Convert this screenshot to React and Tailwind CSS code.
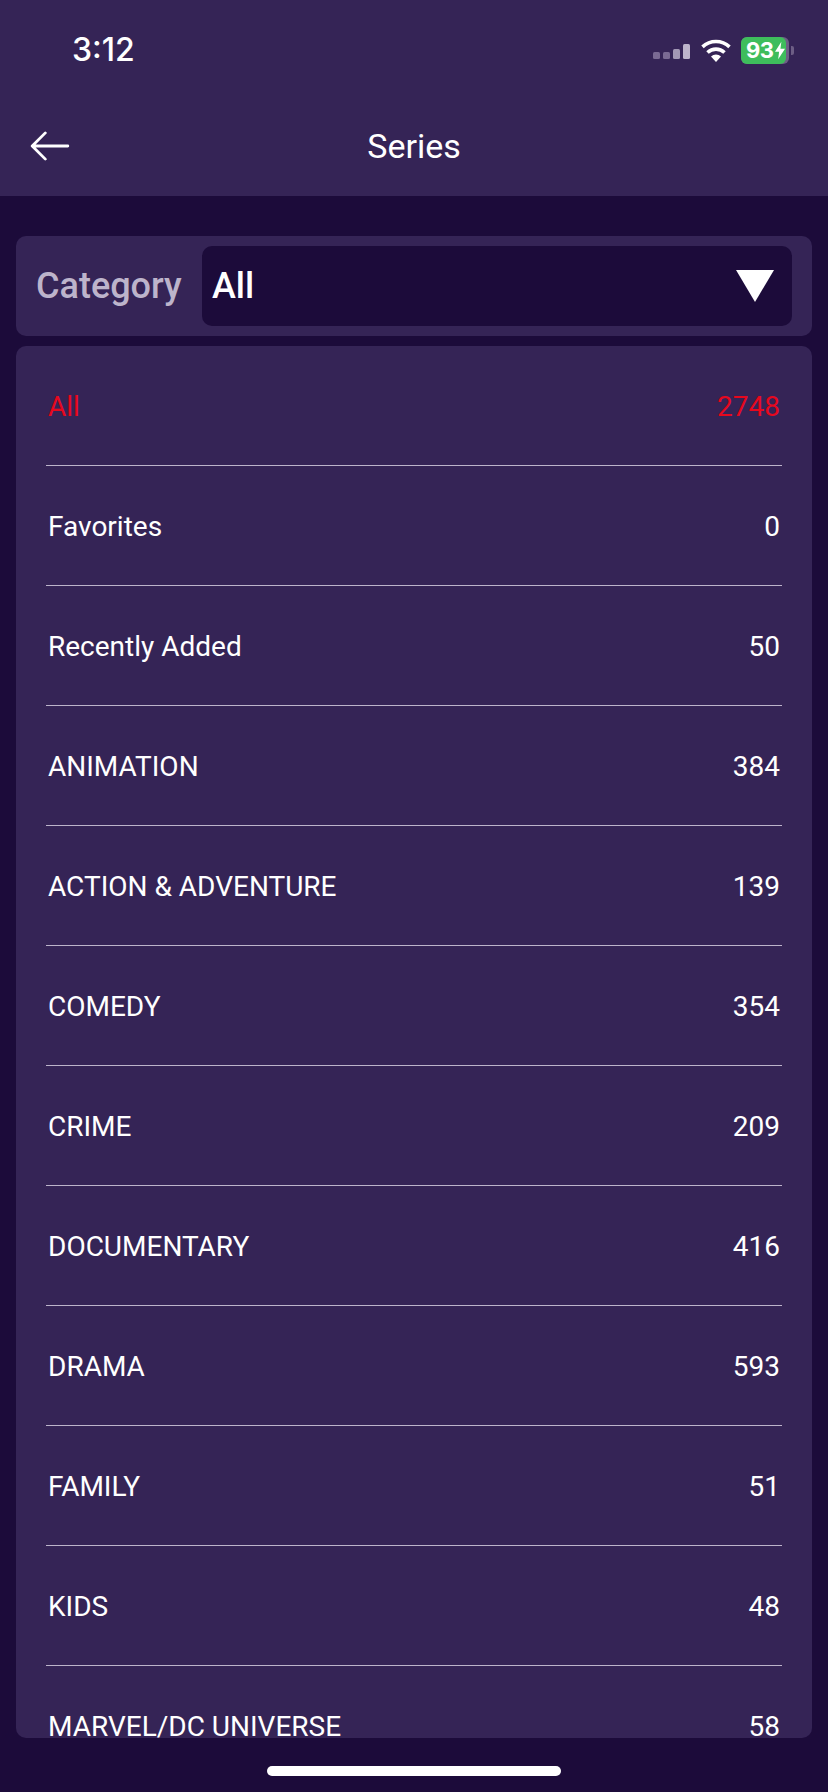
const rows = [
  ["All", "2748"], ["Favorites", "0"], ["Recently Added", "50"], ["ANIMATION", "384"],
  ["ACTION & ADVENTURE", "139"], ["COMEDY", "354"], ["CRIME", "209"], ["DOCUMENTARY", "416"],
  ["DRAMA", "593"], ["FAMILY", "51"], ["KIDS", "48"], ["MARVEL/DC UNIVERSE", "58"],
];

function Signal() {
  return (
    <svg width="38" height="18" viewBox="0 0 38 18" className="block">
      <rect x="0" y="9" width="7" height="7" rx="1.5" fill="#7a6a93" />
      <rect x="10" y="9" width="7" height="7" rx="1.5" fill="#7a6a93" />
      <rect x="20" y="6" width="7" height="10" rx="1.5" fill="#a398b5" />
      <rect x="30" y="1" width="7" height="15" rx="1.5" fill="#bdb4cb" />
    </svg>
  );
}

function Wifi() {
  return (
    <svg width="32" height="24" viewBox="0 0 32 24" className="block">
      <path d="M16 24 L11 18.5 A7.5 7.5 0 0 1 21 18.5 Z" fill="#fff" />
      <path d="M7.5 14.5 A12.5 12.5 0 0 1 24.5 14.5" fill="none" stroke="#fff" strokeWidth="3.6" />
      <path d="M2.5 8.8 A20 20 0 0 1 29.5 8.8" fill="none" stroke="#fff" strokeWidth="3.6" />
    </svg>
  );
}

function Battery() {
  return (
    <div className="flex items-center">
      <div className="flex h-[27px] w-[48px] items-center rounded-[6px] bg-[#6d5e85]">
        <div className="flex h-full w-[45px] items-center rounded-[6px] bg-[#3ebd5c] pl-[5px] text-[22px] font-bold leading-none text-white [font-family:Inter,sans-serif]">
          <span className="tracking-[-0.5px]">93</span>
          <svg width="10" height="19" viewBox="0 0 11 19" className="ml-[1px] shrink-0">
            <path d="M7 0 L0 11 H4.5 L3.5 19 L11 7.5 H6 Z" fill="#fff" />
          </svg>
        </div>
      </div>
      <div className="ml-[2px] h-[9px] w-[3px] rounded-r-[2px] bg-[#6d5e85]" />
    </div>
  );
}

export default function App() {
  return (
    <div className="flex h-[1792px] w-[828px] flex-col overflow-hidden bg-[#1c0b3a] text-white [font-family:Roboto,sans-serif]">
      <header className="h-[196px] shrink-0 bg-[#352456]">
        <div className="flex h-[100px] items-center justify-between pl-[72px] pr-[34px]">
          <span className="text-[32px] font-medium leading-none [font-family:Inter,sans-serif]">3:12</span>
          <div className="flex items-center">
            <div className="mr-[9px] mt-[3px]"><Signal /></div>
            <div className="mr-[9px]"><Wifi /></div>
            <Battery />
          </div>
        </div>
        <div className="relative flex h-[96px] items-center justify-center pb-[4px]">
          <svg width="40" height="30" viewBox="0 0 42 32" className="absolute left-[30px] top-[31px]" fill="none" stroke="#fff" strokeWidth="3" strokeLinecap="round" strokeLinejoin="round">
            <path d="M40 16 H3 M16 2 L2 16 L16 30" />
          </svg>
          <span className="text-[34px] leading-none">Series</span>
        </div>
      </header>

      <main className="flex min-h-0 flex-col px-[16px] pt-[40px]">
        <section className="flex h-[100px] shrink-0 items-center rounded-[10px] bg-[#352456] pl-[20px] pr-[20px]">
          <span className="w-[166px] shrink-0 text-[36px] font-medium leading-none text-[#bdb4cb]">Category</span>
          <div className="flex h-[80px] flex-1 items-center justify-between rounded-[10px] bg-[#1c0b3a] pl-[10px] pr-[18px]">
            <span className="text-[36px] font-medium leading-none">All</span>
            <svg width="38" height="32" viewBox="0 0 38 32" className="block"><path d="M0 0 H38 L19 32 Z" fill="#fff" /></svg>
          </div>
        </section>

        <section className="mt-[10px] h-[1392px] shrink-0 overflow-hidden rounded-[10px] bg-[#352456] px-[30px]">
          {rows.map(([name, count], i) => (
            <div key={name} className={`flex h-[120px] items-center justify-between border-b border-[#bdb4cb] pl-[2px] pr-[2px] pt-[3px] text-[28px] leading-none ${i === 0 ? "text-[#e6081e]" : "text-white"}`}>
              <span>{name}</span>
              <span>{count}</span>
            </div>
          ))}
        </section>

        <div className="mt-[28px] h-[10px] w-[294px] shrink-0 self-center rounded-full bg-white" />
      </main>
    </div>
  );
}
